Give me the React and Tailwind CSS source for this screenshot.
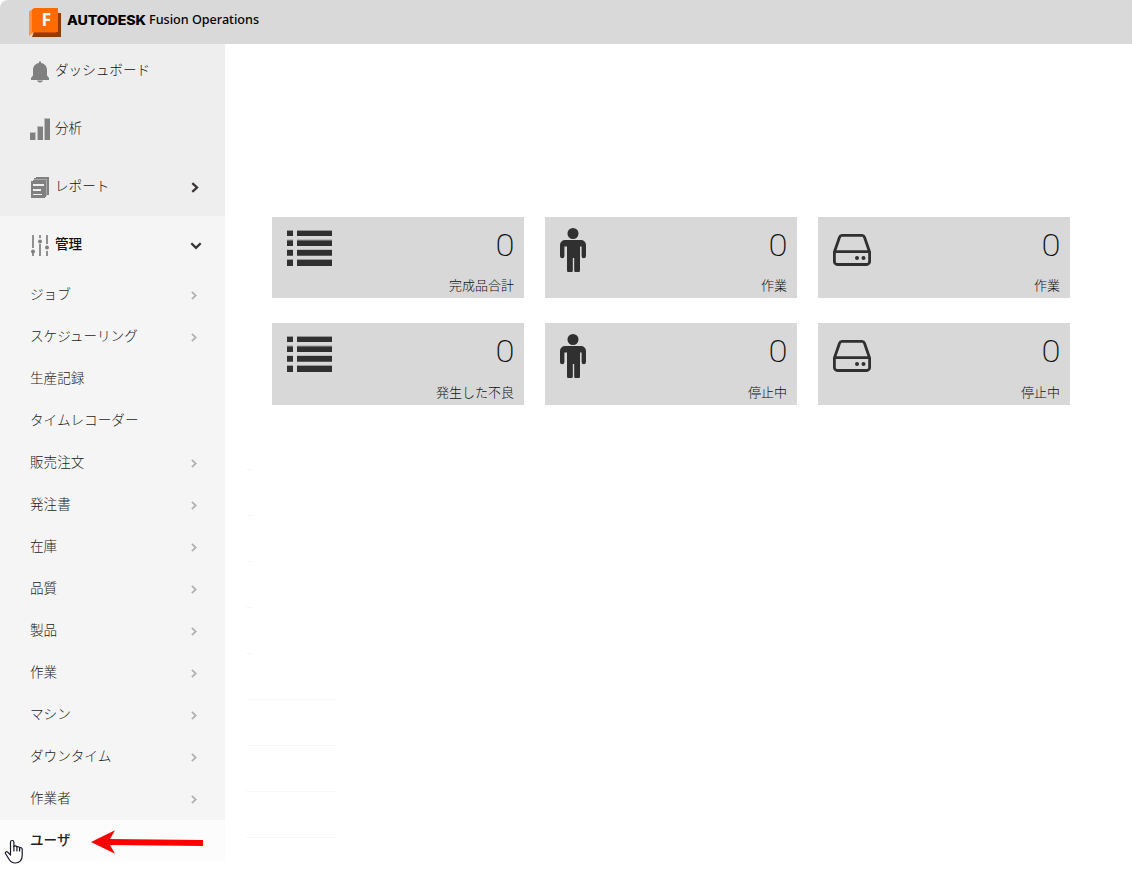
import React from 'react';

const Bell = () => (
  <svg width="20" height="22" viewBox="0 0 20 22" fill="#808080">
    <path d="M9 1.200a1 1 0 0 1 2 0V2c3.500.6 6 3.300 6 7v5.500l2 2.500V19H1v-2l2-2.500V9c0-3.700 2.500-6.400 6-7z" />
    <path d="M7 19.500h6c-.5 1.300-1.500 2-3 2s-2.500-.7-3-2z" />
  </svg>
);

const Bars = () => (
  <svg className="relative -top-px" width="20" height="22" viewBox="0 0 20 22">
    <path fill="#bdbdbd" d="M0 14h6v8H0zM7 8h6v14H7zM14 0h6v22h-6z" />
    <path fill="#808080" d="M0 15h5v7H0zM8 9h5v13H8zM15 1h5v21h-5z" />
  </svg>
);

const Report = () => (
  <svg width="20" height="22" viewBox="0 0 20 22">
    <path fill="#808080" d="M6 0h13v18h-2V2H4V1h2zM3 3h13v17h-1V5H1V4h2zM1 5h14v16H1z" />
    <path fill="#aaa" d="M4 2h13v1H4zM16 3h1v16h-1z" />
    <path fill="#eee" d="M3 7h11v2H3zM3 12h8v2H3zM3 17h9v1H3z" />
  </svg>
);

const Sliders = () => (
  <svg width="20" height="22" viewBox="0 0 20 22">
    <path fill="#909090" d="M2 1h2v13H2zM2 19h2v3H2zM9 1h2v3H9zM9 10h2v12H9zM16 1h2v9h-2zM16 17h2v5h-2z" />
    <g fill="#808080">
      <circle cx="3" cy="17.500" r="2" />
      <circle cx="10" cy="7.500" r="2" />
      <circle cx="17" cy="13.500" r="2" />
    </g>
  </svg>
);

const Right = ({ dark }) =>
  dark ? (
    <svg width="8" height="11" viewBox="0 0 8 11" fill="none" stroke="#3a3435" strokeWidth="2.300">
      <path d="M1.300 1.200 6 5.500 1.300 9.800" />
    </svg>
  ) : (
    <svg width="6" height="9" viewBox="0 0 6 9" fill="none" stroke="#b4b2b4" strokeWidth="1.900">
      <path d="M.9.9 4.700 4.500.9 8.100" />
    </svg>
  );

const Down = () => (
  <svg className="relative top-px" width="12" height="8" viewBox="0 0 12 8" fill="none" stroke="#3a3435" strokeWidth="2.300">
    <path d="M1.300 1.200 6 5.900l4.700-4.700" />
  </svg>
);

const ListIcon = () => (
  <svg width="45" height="36" viewBox="0 0 45 36" fill="#303030">
    <path d="M0 .5h6V6H0zM10 .5h35V6H10zM0 10.200h6V16H0zM10 10.200h35V16H10zM0 20h6v5.800H0zM10 20h35v5.800H10zM0 30h6v6H0zM10 30h35v6H10z" />
    <path fill="#999" d="M0 0h6v.7H0zM10 0h35v.7H10zM0 9.500h6v.7H0zM10 9.500h35v.7H10zM0 19.500h6v.6H0zM10 19.500h35v.6H10zM0 29h6v1H0zM10 29h35v1H10z" />
  </svg>
);

const Person = () => (
  <svg width="26" height="44" viewBox="0 0 26 44" fill="#303030">
    <circle cx="13" cy="5.500" r="5.500" />
    <path d="M5 12h16a5 5 0 0 1 5 5v11a2.200 2.200 0 0 1-4.400 0V18.500H20V42a2.900 2.900 0 0 1-5.800 0V30h-1.400v12A2.900 2.900 0 0 1 7 42V18.500H4.400V28A2.200 2.200 0 0 1 0 28V17a5 5 0 0 1 5-5z" />
  </svg>
);

const Drive = () => (
  <svg width="38" height="32" viewBox="0 0 38 32" fill="none" stroke="#303030" strokeWidth="2.800">
    <path d="M1.400 18 6.500 3.300Q7.200 1.400 9 1.400h20q1.800 0 2.500 1.900L36.600 18v9.500a3 3 0 0 1-3 3H4.400a3 3 0 0 1-3-3zM2 17.600h34" />
    <circle cx="24" cy="24" r="2" fill="#303030" stroke="none" />
    <circle cx="30.500" cy="24" r="2" fill="#303030" stroke="none" />
  </svg>
);

const menu = [
  { label: 'ダッシュボード', Icon: Bell },
  { label: '分析', Icon: Bars },
  { label: 'レポート', Icon: Report, arrow: true },
];

const submenu = [
  ['ジョブ', true],
  ['スケジューリング', true],
  ['生産記録', false],
  ['タイムレコーダー', false],
  ['販売注文', true],
  ['発注書', true],
  ['在庫', true],
  ['品質', true],
  ['製品', true],
  ['作業', true],
  ['マシン', true],
  ['ダウンタイム', true],
  ['作業者', true],
];

const cards = [
  { label: '完成品合計', Icon: ListIcon, pad: 'pl-[15px] pt-[13px]' },
  { label: '作業', Icon: Person, pad: 'pl-[15px] pt-[11px]' },
  { label: '作業', Icon: Drive, pad: 'pl-[15px] pt-[17px]' },
  { label: '発生した不良', Icon: ListIcon, pad: 'pl-[15px] pt-[13px]' },
  { label: '停止中', Icon: Person, pad: 'pl-[15px] pt-[11px]' },
  { label: '停止中', Icon: Drive, pad: 'pl-[15px] pt-[17px]' },
];

const rules = ['w-[7px]', 'w-[7px]', 'w-[7px]', 'w-[7px]', 'w-[7px]', 'w-[90px]', 'w-[90px]', 'w-[90px]', 'w-[90px]'];

export default function App() {
  return (
    <div className="relative flex h-[874px] w-[1132px] flex-col overflow-hidden bg-white font-['Noto_Sans_CJK_JP',sans-serif] text-[13.6px] text-[#111]">
      <header className="flex h-11 shrink-0 items-start rounded-tl-[8px] bg-[#d9d9d9] pl-[29px] text-black">
        <svg className="mt-[8px] shrink-0" width="32" height="29" viewBox="0 0 32 29">
          <path fill="#ff9148" d="M0 3.500 5 0v24L0 28z" />
          <path fill="#943b00" d="M5 24h24V5h3v24H3z" />
          <path fill="#ff6b00" d="M5 0h24v24H3V2z" />
          <path fill="#c25000" d="m3 26 2-2h22v1H5z" />
          <text x="12.500" y="18" fill="#fff" fontFamily="Open Sans, sans-serif" fontWeight="700" fontSize="17.500">F</text>
        </svg>
        <span className="ml-[6px] mt-[10px] inline-block w-[78px] origin-left scale-x-[1.09] whitespace-nowrap font-['Inter',sans-serif] text-[13px] font-extrabold leading-5 tracking-[-0.1px]">AUTODESK</span>
        <span className="ml-[4px] mt-[10px] whitespace-nowrap font-['Noto_Sans',sans-serif] text-[12.6px] font-medium leading-5">Fusion Operations</span>
      </header>

      <div className="flex flex-1">
        <aside className="w-[225px] shrink-0 font-light">
          <nav className="bg-[#eeeeee]">
            {menu.map(({ label, Icon, arrow }, i) => (
              <div key={label} className={`flex items-center pl-[30px] pr-[26px] ${i === 0 ? 'h-14 pb-px' : 'h-[58px] pt-px'}`}>
                <Icon />
                <span className="ml-[5px] flex-1 pb-[5px] leading-5">{label}</span>
                {arrow && <Right dark />}
              </div>
            ))}
          </nav>
          <div className="bg-[#f5f5f5]">
            <div className="flex h-[58px] items-center pl-[30px] pr-[23px]">
              <Sliders />
              <span className="ml-[5px] flex-1 pb-[4px] font-medium leading-5">管理</span>
              <Down />
            </div>
            {submenu.map(([label, arrow]) => (
              <div key={label} className="flex h-[42px] items-center pl-[30px] pr-[28px] text-[#1c1c1c]">
                <span className="flex-1 pb-[4px] leading-5">{label}</span>
                {arrow && <Right />}
              </div>
            ))}
          </div>
          <div className="flex h-[42px] items-center bg-[#fcfcfc] pl-[30px] font-medium text-[#222]">
            <span className="pb-[4px] leading-5">ユーザ</span>
          </div>
        </aside>

        <main className="flex-1 pl-[20px] pt-[173px]">
          <div className="ml-[27px] grid w-[798px] grid-cols-[252px_252px_252px] grid-rows-[81px_82px] gap-x-[21px] gap-y-[25px]">
            {cards.map(({ label, Icon, pad }, i) => (
              <div key={i} className="flex justify-between bg-[#d8d8d8]">
                <div className={pad}><Icon /></div>
                <div className="flex flex-col items-end justify-between pb-[4px] pr-[10px] text-[#111]">
                  <span className="-mr-px mt-[8px] origin-right scale-x-[1.08] font-['Roboto',sans-serif] text-[32px] font-extralight leading-10">0</span>
                  <span className="text-[13px] font-light leading-[18px]">{label}</span>
                </div>
              </div>
            ))}
          </div>
          <div className="ml-px mt-[64px] flex flex-col gap-[45px]">
            {rules.map((w, i) => (
              <div key={i} className={`h-px bg-[#f7f7f7] ${w}`} />
            ))}
          </div>
        </main>
      </div>

      <svg className="absolute left-[91px] top-[830px]" width="113" height="24" viewBox="0 0 113 24" fill="#ff0000">
        <path d="M0 12 24 .3 19 9l93 1v6l-93-1 5 8.800z" />
      </svg>
      <svg className="absolute left-[4px] top-[839px]" width="20" height="25" viewBox="0 0 20 25" fill="#fff" stroke="#17172b" strokeWidth="1.200" strokeLinejoin="round" strokeLinecap="round">
        <path d="M6.500 16V3.200a1.700 1.700 0 0 1 3.400 0v4.300c.5-1 2.600-.9 3 .6.700-.8 2.400-.5 2.700.8.800-.6 2.600-.1 2.600 1.500v6.200c0 4-2.500 7.400-7 7.400-3.500 0-5-1.600-6.500-4.200L1.500 14.500c-.7-1.300.9-2.500 2.200-1.400z" />
        <path d="M9.900 7.500V12M12.900 8.500V12M15.600 9.300V12" />
      </svg>
    </div>
  );
}
